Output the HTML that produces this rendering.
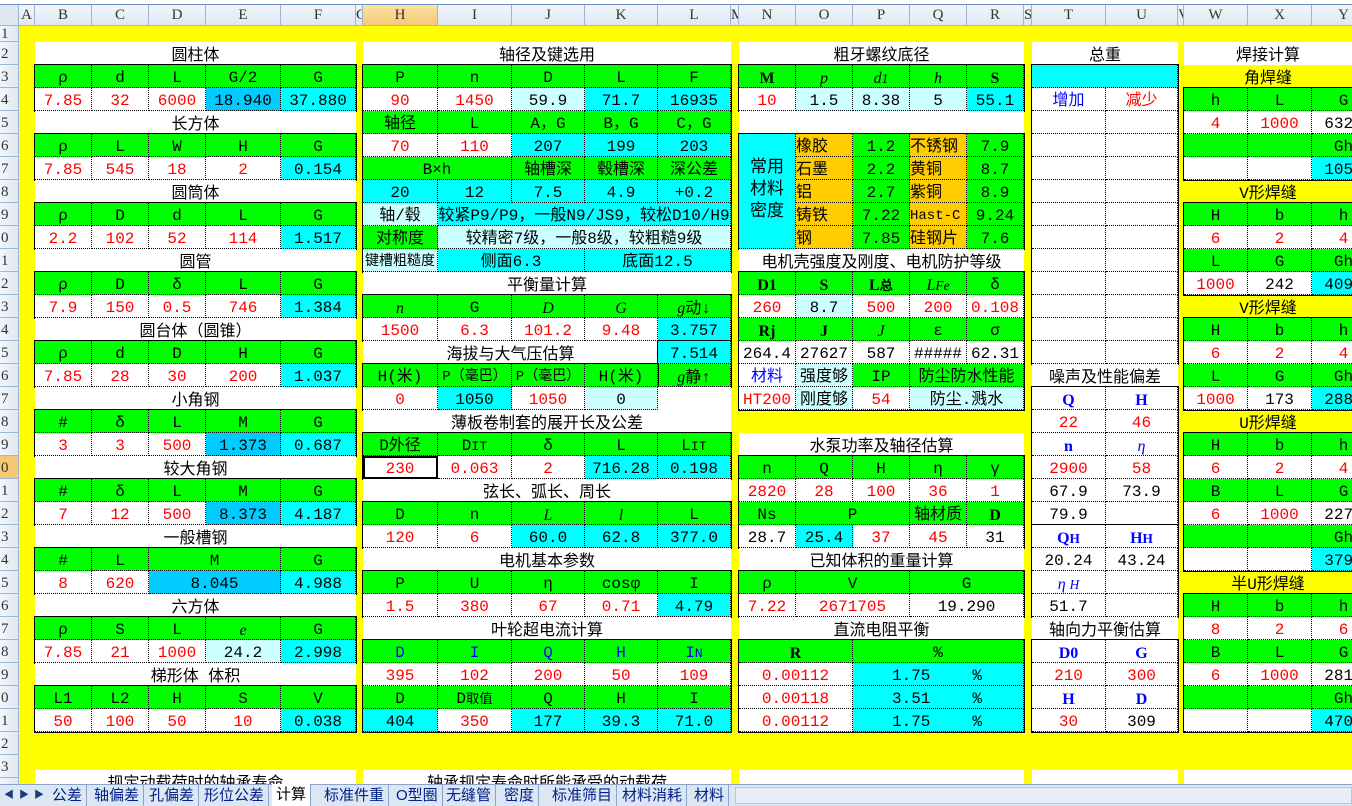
<!DOCTYPE html>
<html><head><meta charset="utf-8">
<style>
*{box-sizing:border-box}
body{margin:0;width:1352px;height:806px;overflow:hidden;position:relative;background:#ffff00;font-family:"Liberation Mono","Noto Sans CJK SC",monospace;font-size:16px;color:#000}
.top{position:absolute;left:0;top:0;width:1352px;height:5px;background:#fff;border-bottom:1px solid #6d8fc4}
.ch{position:absolute;top:5px;height:21px;background:linear-gradient(#f3f6fb,#dfe7f2);border-right:1px solid #9eb6d4;border-bottom:1px solid #9eb6d4;text-align:center;font:15px "Liberation Serif","Noto Serif CJK SC",serif;line-height:21px;color:#333;overflow:hidden}
.rh{position:absolute;left:0;width:19px;height:23px;background:linear-gradient(90deg,#f3f6fb,#dfe7f2);border-bottom:1px solid #9eb6d4;border-right:1px solid #9eb6d4;font:15px "Liberation Serif",serif;line-height:24px;color:#333;overflow:hidden;padding-left:1px}
.t{position:absolute;background:#fff;height:23px;line-height:28px;text-align:center;white-space:nowrap;overflow:hidden}
.ty{position:absolute;height:23px;line-height:28px;text-align:center;white-space:nowrap}
.b{position:absolute;display:grid;grid-auto-rows:23px;outline:1.5px solid #000;background:#fff}
.b>p{margin:0;border-right:1px dotted #000;border-bottom:1px dotted #000;text-align:center;line-height:27px;overflow:hidden;white-space:nowrap}
.g{background:#00ff00}.c{background:#00ffff}.lc{background:#ccffff}.dc{background:#00ccff}.o{background:#ffcc00;text-align:left!important}
.r{color:#f00}.u{color:#00f}.it{font-style:italic;font-family:"Liberation Serif",serif}.sf{font-family:"Liberation Serif",serif;font-weight:bold}
.s2{grid-column:span 2}.s3{grid-column:span 3}.s4{grid-column:span 4}
.tabs{position:absolute;left:0;top:784px;width:1352px;height:22px;background:#dde7f4;border-top:1px solid #8aa5cc;font:15px "Liberation Sans","Noto Sans CJK SC",sans-serif}
.tab{position:absolute;top:0;height:21px;line-height:21px;color:#00208a;border-right:1px solid #8aa5cc;padding:0 4px}
</style></head><body>
<div class="top"></div>
<div class="ch" style="left:0;width:19px;background:#dfe7f2"></div>
<div class="ch" style="left:19px;width:16px">A</div>
<div class="ch" style="left:35px;width:57px">B</div>
<div class="ch" style="left:92px;width:57px">C</div>
<div class="ch" style="left:149px;width:57px">D</div>
<div class="ch" style="left:206px;width:75px">E</div>
<div class="ch" style="left:281px;width:75px">F</div>
<div class="ch" style="left:356px;width:7px">G</div>
<div class="ch" style="left:363px;width:75px;background:linear-gradient(#fbe3a8,#f6c873)">H</div>
<div class="ch" style="left:438px;width:74px">I</div>
<div class="ch" style="left:512px;width:73px">J</div>
<div class="ch" style="left:585px;width:73px">K</div>
<div class="ch" style="left:658px;width:73px">L</div>
<div class="ch" style="left:731px;width:8px">M</div>
<div class="ch" style="left:739px;width:57px">N</div>
<div class="ch" style="left:796px;width:57px">O</div>
<div class="ch" style="left:853px;width:57px">P</div>
<div class="ch" style="left:910px;width:57px">Q</div>
<div class="ch" style="left:967px;width:57px">R</div>
<div class="ch" style="left:1024px;width:8px">S</div>
<div class="ch" style="left:1032px;width:74px">T</div>
<div class="ch" style="left:1106px;width:72px">U</div>
<div class="ch" style="left:1178px;width:6px">V</div>
<div class="ch" style="left:1184px;width:64px">W</div>
<div class="ch" style="left:1248px;width:64px">X</div>
<div class="ch" style="left:1312px;width:64px">Y</div>
<div class="rh" style="top:26px;height:16px;line-height:17px">1</div>
<div class="rh" style="top:42px">2</div><div class="rh" style="top:65px">3</div><div class="rh" style="top:88px">4</div><div class="rh" style="top:111px">5</div><div class="rh" style="top:134px">6</div><div class="rh" style="top:157px">7</div><div class="rh" style="top:180px">8</div><div class="rh" style="top:203px">9</div><div class="rh" style="top:226px">0</div><div class="rh" style="top:249px">1</div><div class="rh" style="top:272px">2</div><div class="rh" style="top:295px">3</div><div class="rh" style="top:318px">4</div><div class="rh" style="top:341px">5</div><div class="rh" style="top:364px">6</div><div class="rh" style="top:387px">7</div><div class="rh" style="top:410px">8</div><div class="rh" style="top:433px">9</div><div class="rh" style="top:456px;background:#f6c873">0</div><div class="rh" style="top:479px">1</div><div class="rh" style="top:502px">2</div><div class="rh" style="top:525px">3</div><div class="rh" style="top:548px">4</div><div class="rh" style="top:571px">5</div><div class="rh" style="top:594px">6</div><div class="rh" style="top:617px">7</div><div class="rh" style="top:640px">8</div><div class="rh" style="top:663px">9</div><div class="rh" style="top:686px">0</div><div class="rh" style="top:709px">1</div><div class="rh" style="top:732px">2</div><div class="rh" style="top:755px">3</div><div class="rh" style="top:778px">4</div>

<div class="t" style="left:35px;top:42px;width:321px">圆柱体</div>
<div class="b" style="left:35px;top:65px;grid-template-columns:57px 57px 57px 75px 75px">
<p class="g">ρ</p><p class="g">d</p><p class="g">L</p><p class="g">G/2</p><p class="g">G</p>
<p class="r">7.85</p><p class="r">32</p><p class="r">6000</p><p class="dc">18.940</p><p class="c">37.880</p></div>
<div class="t" style="left:35px;top:111px;width:321px">长方体</div>
<div class="b" style="left:35px;top:134px;grid-template-columns:57px 57px 57px 75px 75px">
<p class="g">ρ</p><p class="g">L</p><p class="g">W</p><p class="g">H</p><p class="g">G</p>
<p class="r">7.85</p><p class="r">545</p><p class="r">18</p><p class="r">2</p><p class="c">0.154</p></div>
<div class="t" style="left:35px;top:180px;width:321px">圆筒体</div>
<div class="b" style="left:35px;top:203px;grid-template-columns:57px 57px 57px 75px 75px">
<p class="g">ρ</p><p class="g">D</p><p class="g">d</p><p class="g">L</p><p class="g">G</p>
<p class="r">2.2</p><p class="r">102</p><p class="r">52</p><p class="r">114</p><p class="c">1.517</p></div>
<div class="t" style="left:35px;top:249px;width:321px">圆管</div>
<div class="b" style="left:35px;top:272px;grid-template-columns:57px 57px 57px 75px 75px">
<p class="g">ρ</p><p class="g">D</p><p class="g">δ</p><p class="g">L</p><p class="g">G</p>
<p class="r">7.9</p><p class="r">150</p><p class="r">0.5</p><p class="r">746</p><p class="c">1.384</p></div>
<div class="t" style="left:35px;top:318px;width:321px">圆台体（圆锥）</div>
<div class="b" style="left:35px;top:341px;grid-template-columns:57px 57px 57px 75px 75px">
<p class="g">ρ</p><p class="g">d</p><p class="g">D</p><p class="g">H</p><p class="g">G</p>
<p class="r">7.85</p><p class="r">28</p><p class="r">30</p><p class="r">200</p><p class="c">1.037</p></div>
<div class="t" style="left:35px;top:387px;width:321px">小角钢</div>
<div class="b" style="left:35px;top:410px;grid-template-columns:57px 57px 57px 75px 75px">
<p class="g">#</p><p class="g">δ</p><p class="g">L</p><p class="g">M</p><p class="g">G</p>
<p class="r">3</p><p class="r">3</p><p class="r">500</p><p class="dc">1.373</p><p class="c">0.687</p></div>
<div class="t" style="left:35px;top:456px;width:321px">较大角钢</div>
<div class="b" style="left:35px;top:479px;grid-template-columns:57px 57px 57px 75px 75px">
<p class="g">#</p><p class="g">δ</p><p class="g">L</p><p class="g">M</p><p class="g">G</p>
<p class="r">7</p><p class="r">12</p><p class="r">500</p><p class="dc">8.373</p><p class="c">4.187</p></div>
<div class="t" style="left:35px;top:525px;width:321px">一般槽钢</div>
<div class="b" style="left:35px;top:548px;grid-template-columns:57px 57px 57px 75px 75px">
<p class="g">#</p><p class="g">L</p><p class="g s2">M</p><p class="g">G</p>
<p class="r">8</p><p class="r">620</p><p class="dc s2">8.045</p><p class="c">4.988</p></div>
<div class="t" style="left:35px;top:594px;width:321px">六方体</div>
<div class="b" style="left:35px;top:617px;grid-template-columns:57px 57px 57px 75px 75px">
<p class="g">ρ</p><p class="g">S</p><p class="g">L</p><p class="g it">e</p><p class="g">G</p>
<p class="r">7.85</p><p class="r">21</p><p class="r">1000</p><p class="lc">24.2</p><p class="c">2.998</p></div>
<div class="t" style="left:35px;top:663px;width:321px">梯形体 体积</div>
<div class="b" style="left:35px;top:686px;grid-template-columns:57px 57px 57px 75px 75px">
<p class="g">L1</p><p class="g">L2</p><p class="g">H</p><p class="g">S</p><p class="g">V</p>
<p class="r">50</p><p class="r">100</p><p class="r">50</p><p class="r">10</p><p class="c">0.038</p></div>
<div class="t" style="left:35px;top:770px;width:321px;height:20px">规定动载荷时的轴承寿命</div>

<div class="t" style="left:363px;top:42px;width:368px">轴径及键选用</div>
<div class="b" style="left:363px;top:65px;grid-template-columns:75px 74px 73px 73px 73px">
<p class="g">P</p><p class="g">n</p><p class="g">D</p><p class="g">L</p><p class="g">F</p>
<p class="r">90</p><p class="r">1450</p><p class="lc">59.9</p><p class="c">71.7</p><p class="c">16935</p>
<p class="g">轴径</p><p class="g">L</p><p class="g">A，G</p><p class="g">B，G</p><p class="g">C，G</p>
<p class="r">70</p><p class="r">110</p><p class="c">207</p><p class="c">199</p><p class="c">203</p>
<p class="g s2">B×h</p><p class="g">轴槽深</p><p class="g">毂槽深</p><p class="g">深公差</p>
<p class="c">20</p><p class="c">12</p><p class="c">7.5</p><p class="c">4.9</p><p class="c">+0.2</p>
<p class="lc">轴/毂</p><p class="c s4">较紧P9/P9，一般N9/JS9，较松D10/H9</p>
<p class="g">对称度</p><p class="lc s4">较精密7级，一般8级，较粗糙9级</p>
<p class="lc" style="font-size:14px">键槽粗糙度</p><p class="c s2">侧面6.3</p><p class="c s2">底面12.5</p></div>
<div class="t" style="left:363px;top:272px;width:368px">平衡量计算</div>
<div class="b" style="left:363px;top:295px;grid-template-columns:75px 74px 73px 73px 73px">
<p class="g it">n</p><p class="g">G</p><p class="g it">D</p><p class="g it">G</p><p class="g"><span class="it">g</span>动↓</p>
<p class="r">1500</p><p class="r">6.3</p><p class="r">101.2</p><p class="r">9.48</p><p class="c">3.757</p></div>
<div class="t" style="left:363px;top:341px;width:295px">海拔与大气压估算</div>
<div class="b" style="left:658px;top:341px;grid-template-columns:73px">
<p class="c">7.514</p><p class="g"><span class="it">g</span>静↑</p></div>
<div class="b" style="left:363px;top:364px;grid-template-columns:75px 74px 73px 73px">
<p class="g">H(米)</p><p class="g" style="font-size:14px">P（毫巴）</p><p class="g" style="font-size:14px">P（毫巴）</p><p class="g">H(米)</p>
<p class="r">0</p><p class="c">1050</p><p class="r">1050</p><p class="lc">0</p></div>
<div class="t" style="left:658px;top:387px;width:73px"></div>
<div class="t" style="left:363px;top:410px;width:368px">薄板卷制套的展开长及公差</div>
<div class="b" style="left:363px;top:433px;grid-template-columns:75px 74px 73px 73px 73px">
<p class="g">D外径</p><p class="g">D<small>IT</small></p><p class="g">δ</p><p class="g">L</p><p class="g">L<small>IT</small></p>
<p class="r" style="outline:2px solid #000;outline-offset:-2px">230</p><p class="r">0.063</p><p class="r">2</p><p class="c">716.28</p><p class="c">0.198</p></div>
<div class="t" style="left:363px;top:479px;width:368px">弦长、弧长、周长</div>
<div class="b" style="left:363px;top:502px;grid-template-columns:75px 74px 73px 73px 73px">
<p class="g">D</p><p class="g">n</p><p class="g it">L</p><p class="g it">l</p><p class="g">L</p>
<p class="r">120</p><p class="r">6</p><p class="c">60.0</p><p class="c">62.8</p><p class="c">377.0</p></div>
<div class="t" style="left:363px;top:548px;width:368px">电机基本参数</div>
<div class="b" style="left:363px;top:571px;grid-template-columns:75px 74px 73px 73px 73px">
<p class="g">P</p><p class="g">U</p><p class="g">η</p><p class="g">cosφ</p><p class="g">I</p>
<p class="r">1.5</p><p class="r">380</p><p class="r">67</p><p class="r">0.71</p><p class="c">4.79</p></div>
<div class="t" style="left:363px;top:617px;width:368px">叶轮超电流计算</div>
<div class="b" style="left:363px;top:640px;grid-template-columns:75px 74px 73px 73px 73px">
<p class="g u">D</p><p class="g u">I</p><p class="g u">Q</p><p class="g u">H</p><p class="g u">I<small>N</small></p>
<p class="r">395</p><p class="r">102</p><p class="r">200</p><p class="r">50</p><p class="r">109</p>
<p class="g">D</p><p class="g">D<small>取值</small></p><p class="g">Q</p><p class="g">H</p><p class="g">I</p>
<p class="c">404</p><p class="r">350</p><p class="c">177</p><p class="c">39.3</p><p class="c">71.0</p></div>
<div class="t" style="left:363px;top:770px;width:368px;height:20px">轴承规定寿命时所能承受的动载荷</div>

<div class="t" style="left:739px;top:42px;width:285px">粗牙螺纹底径</div>
<div class="b" style="left:739px;top:65px;grid-template-columns:57px 57px 57px 57px 57px">
<p class="g sf">M</p><p class="g it">p</p><p class="g it">d<small>1</small></p><p class="g it">h</p><p class="g sf">S</p>
<p class="r">10</p><p class="lc">1.5</p><p class="lc">8.38</p><p class="lc">5</p><p class="c">55.1</p></div>
<div class="t" style="left:739px;top:111px;width:285px"></div>
<div class="b" style="left:739px;top:134px;grid-template-columns:57px 57px 57px 57px 57px">
<p class="c" style="grid-row:span 5;white-space:normal;font-size:17px;line-height:22px;padding-top:24px">常用<br>材料<br>密度</p>
<p class="o">橡胶</p><p class="g">1.2</p><p class="o">不锈钢</p><p class="g">7.9</p>
<p class="o">石墨</p><p class="g">2.2</p><p class="o">黄铜</p><p class="g">8.7</p>
<p class="o">铝</p><p class="g">2.7</p><p class="o">紫铜</p><p class="g">8.9</p>
<p class="o">铸铁</p><p class="g">7.22</p><p class="o" style="font-size:14px">Hast-C</p><p class="g">9.24</p>
<p class="o">钢</p><p class="g">7.85</p><p class="o">硅钢片</p><p class="g">7.6</p></div>
<div class="t" style="left:739px;top:249px;width:285px">电机壳强度及刚度、电机防护等级</div>
<div class="b" style="left:739px;top:272px;grid-template-columns:57px 57px 57px 57px 57px">
<p class="g sf">D1</p><p class="g sf">S</p><p class="g sf">L<small>总</small></p><p class="g it">L<small>Fe</small></p><p class="g">δ</p>
<p class="r">260</p><p class="lc">8.7</p><p class="r">500</p><p class="r">200</p><p class="r">0.108</p>
<p class="g sf">Rj</p><p class="g sf">J</p><p class="g it">J</p><p class="g">ε</p><p class="g">σ</p>
<p>264.4</p><p>27627</p><p>587</p><p>#####</p><p>62.31</p>
<p class="u">材料</p><p class="lc">强度够</p><p class="g">IP</p><p class="g s2">防尘防水性能</p>
<p class="r">HT200</p><p class="lc">刚度够</p><p class="r">54</p><p class="lc s2">防尘.溅水</p></div>
<div class="t" style="left:739px;top:433px;width:285px">水泵功率及轴径估算</div>
<div class="b" style="left:739px;top:456px;grid-template-columns:57px 57px 57px 57px 57px">
<p class="g">n</p><p class="g">Q</p><p class="g">H</p><p class="g">η</p><p class="g">γ</p>
<p class="r">2820</p><p class="r">28</p><p class="r">100</p><p class="r">36</p><p class="r">1</p>
<p class="g">Ns</p><p class="g s2">P</p><p class="g">轴材质</p><p class="g sf">D</p>
<p>28.7</p><p class="c">25.4</p><p class="r">37</p><p class="r">45</p><p>31</p></div>
<div class="t" style="left:739px;top:548px;width:285px">已知体积的重量计算</div>
<div class="b" style="left:739px;top:571px;grid-template-columns:57px 57px 57px 57px 57px">
<p class="g">ρ</p><p class="g s2">V</p><p class="g s2">G</p>
<p class="r">7.22</p><p class="r s2">2671705</p><p class="s2">19.290</p></div>
<div class="t" style="left:739px;top:617px;width:285px">直流电阻平衡</div>
<div class="b" style="left:739px;top:640px;grid-template-columns:57px 57px 57px 57px 57px">
<p class="g sf s2">R</p><p class="g s3">%</p>
<p class="r s2">0.00112</p><p class="c s3" style="text-align:left;padding-left:39px">1.75<span style="margin-left:42px">%</span></p>
<p class="r s2">0.00118</p><p class="c s3" style="text-align:left;padding-left:39px">3.51<span style="margin-left:42px">%</span></p>
<p class="r s2">0.00112</p><p class="c s3" style="text-align:left;padding-left:39px">1.75<span style="margin-left:42px">%</span></p></div>

<div class="t" style="left:1032px;top:42px;width:146px">总重</div>
<div class="b" style="left:1032px;top:65px;grid-template-columns:74px 72px">
<p class="c s2"></p><p class="u">增加</p><p class="r">减少</p>
<p></p><p></p><p></p><p></p><p></p><p></p><p></p><p></p><p></p><p></p><p></p><p></p><p></p><p></p><p></p><p></p><p></p><p></p><p></p><p></p><p></p><p></p></div>
<div class="t" style="left:1032px;top:364px;width:146px">噪声及性能偏差</div>
<div class="b" style="left:1032px;top:387px;grid-template-columns:74px 72px">
<p class="u sf">Q</p><p class="u sf">H</p><p class="r">22</p><p class="r">46</p>
<p class="u sf">n</p><p class="u it">η</p><p class="r">2900</p><p class="r">58</p>
<p>67.9</p><p>73.9</p><p>79.9</p><p></p></div>
<div class="b" style="left:1032px;top:525px;grid-template-columns:74px 72px">
<p class="u sf">Q<small>H</small></p><p class="u sf">H<small>H</small></p><p>20.24</p><p>43.24</p>
<p class="u it">η <small>H</small></p><p></p><p>51.7</p><p></p></div>
<div class="t" style="left:1032px;top:617px;width:146px">轴向力平衡估算</div>
<div class="b" style="left:1032px;top:640px;grid-template-columns:74px 72px">
<p class="u sf">D0</p><p class="u sf">G</p><p class="r">210</p><p class="r">300</p>
<p class="u sf">H</p><p class="u sf">D</p><p class="r">30</p><p>309</p></div>

<div class="t" style="left:1184px;top:42px;width:168px">焊接计算</div>
<div class="ty" style="left:1184px;top:65px;width:168px">角焊缝</div>
<div class="b" style="left:1184px;top:88px;grid-template-columns:64px 64px 64px">
<p class="g">h</p><p class="g">L</p><p class="g">G</p>
<p class="r">4</p><p class="r">1000</p><p>6320</p>
<p class="g"></p><p class="g"></p><p class="g">Gh</p>
<p></p><p></p><p class="c">1050</p></div>
<div class="ty" style="left:1184px;top:180px;width:168px">V形焊缝</div>
<div class="b" style="left:1184px;top:203px;grid-template-columns:64px 64px 64px">
<p class="g">H</p><p class="g">b</p><p class="g">h</p><p class="r">6</p><p class="r">2</p><p class="r">4</p>
<p class="g">L</p><p class="g">G</p><p class="g">Gh</p><p class="r">1000</p><p>242</p><p class="c">4096</p></div>
<div class="ty" style="left:1184px;top:295px;width:168px">V形焊缝</div>
<div class="b" style="left:1184px;top:318px;grid-template-columns:64px 64px 64px">
<p class="g">H</p><p class="g">b</p><p class="g">h</p><p class="r">6</p><p class="r">2</p><p class="r">4</p>
<p class="g">L</p><p class="g">G</p><p class="g">Gh</p><p class="r">1000</p><p>173</p><p class="c">2880</p></div>
<div class="ty" style="left:1184px;top:410px;width:168px">U形焊缝</div>
<div class="b" style="left:1184px;top:433px;grid-template-columns:64px 64px 64px">
<p class="g">H</p><p class="g">b</p><p class="g">h</p><p class="r">6</p><p class="r">2</p><p class="r">4</p>
<p class="g">B</p><p class="g">L</p><p class="g">G</p><p class="r">6</p><p class="r">1000</p><p>2270</p>
<p class="g"></p><p class="g"></p><p class="g">Gh</p><p></p><p></p><p class="c">3790</p></div>
<div class="ty" style="left:1184px;top:571px;width:168px">半U形焊缝</div>
<div class="b" style="left:1184px;top:594px;grid-template-columns:64px 64px 64px">
<p class="g">H</p><p class="g">b</p><p class="g">h</p><p class="r">8</p><p class="r">2</p><p class="r">6</p>
<p class="g">B</p><p class="g">L</p><p class="g">G</p><p class="r">6</p><p class="r">1000</p><p>2810</p>
<p class="g"></p><p class="g"></p><p class="g">Gh</p><p></p><p></p><p class="c">4700</p></div>
<div class="t" style="left:739px;top:770px;width:285px;height:20px"></div>
<div class="t" style="left:1032px;top:770px;width:146px;height:20px"></div>
<div class="t" style="left:1184px;top:770px;width:168px;height:20px"></div>

<div class="tabs">
<div style="position:absolute;left:4px;top:0;font-size:10px;line-height:21px;color:#1a3a7a;letter-spacing:5px">◀▶▶</div>
<div class="tab" style="left:48px">公差</div>
<div class="tab" style="left:90px">轴偏差</div>
<div class="tab" style="left:145px">孔偏差</div>
<div class="tab" style="left:200px">形位公差</div>
<div class="tab" style="left:272px;background:#fff;color:#000;top:-1px;height:22px">计算</div>
<div class="tab" style="left:320px">标准件重</div>
<div class="tab" style="left:392px">O型圈</div>
<div class="tab" style="left:442px">无缝管</div>
<div class="tab" style="left:500px">密度</div>
<div class="tab" style="left:548px">标准筛目</div>
<div class="tab" style="left:618px">材料消耗</div>
<div class="tab" style="left:690px">材料</div>
<div style="position:absolute;left:735px;top:2px;width:617px;height:17px;background:#e9eef6;border:1px solid #b5c6de"></div>
</div>
</body></html>
